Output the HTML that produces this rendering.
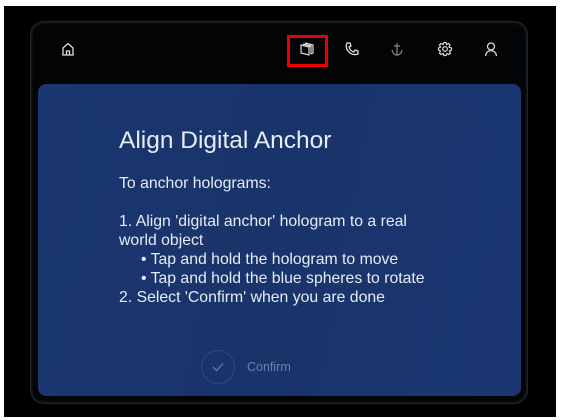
<!DOCTYPE html>
<html><head><meta charset="utf-8"><style>
*{margin:0;padding:0;box-sizing:border-box}
body{width:561px;height:420px;background:#fff;position:relative;overflow:hidden;font-family:"Liberation Sans",sans-serif}
.bk{position:absolute;left:4px;top:6px;width:552px;height:411px;background:#000}
.frame{position:absolute;left:30px;top:21px;width:498px;height:383px;border-radius:14px;background:#030405;border:1px solid #1c2530;box-shadow:0 0 3px #2a3440 inset}
.card{position:absolute;left:38px;top:84px;width:483px;height:312px;border-radius:8px;background:linear-gradient(100deg,#1b3670,#19346a 50%,#1b3672)}
.t{position:absolute;color:#e6ecf5;white-space:nowrap}
.ic{position:absolute;top:41px}
.sel{position:absolute;left:287px;top:35px;width:41px;height:32px;border:3px solid #e00}
</style></head><body>
<div class="bk"></div>
<div class="frame"></div>
<div class="card"></div>
<svg class="ic" style="left:61px" width="14" height="16" viewBox="0 0 14 16" fill="none" stroke="#ddd" stroke-width="1.3"><path d="M2 7L7 2.5L12 7V14H2Z M5.5 14V10H8.5V14"/></svg>
<svg class="ic" style="left:299px" width="16" height="16" viewBox="0 0 16 16" fill="none" stroke="#ddd" stroke-width="1.2"><path d="M2 4L10 6V14L2 12Z M4 3L12 5V13 M10 6L12 5 M6 2L14 4V12L12 13"/></svg>
<svg class="ic" style="left:344px" width="16" height="16" viewBox="0 0 16 16" fill="none" stroke="#ddd" stroke-width="1.3"><path d="M3 2L6 2L7 5L5 6Q6 10 10 11L11 9L14 10L14 13Q8 15 4 10Q1 6 3 2Z"/></svg>
<svg class="ic" style="left:390px" width="14" height="16" viewBox="0 0 14 16" fill="none" stroke="#888" stroke-width="1.2"><path d="M7 2V14 M4 5H10 M2 9Q3 14 7 14Q11 14 12 9"/></svg>
<svg class="ic" style="left:437px" width="16" height="16" viewBox="0 0 16 16" fill="none" stroke="#ddd" stroke-width="1.2"><circle cx="8" cy="8" r="2.3"/><path d="M7 1.5H9L9.5 3.5L11.5 2.5L13 4L12 6L14.5 7V9L12.5 9.8L13.5 12L12 13.5L10 12.5L9 14.5H7L6.3 12.5L4 13.5L2.5 12L3.5 10L1.5 9V7L3.5 6.2L2.5 4L4 2.5L6 3.5Z"/></svg>
<svg class="ic" style="left:484px" width="14" height="16" viewBox="0 0 14 16" fill="none" stroke="#ddd" stroke-width="1.3"><circle cx="7" cy="5.5" r="3.5"/><path d="M1.5 15Q2 10 7 9.5Q12 10 12.5 15"/></svg>
<div class="sel"></div>
<div class="t" style="left:119px;top:127px;font-size:24.5px">Align Digital Anchor</div>
<div class="t" style="left:119px;top:174px;font-size:15.8px;line-height:19px">To anchor holograms:<br><br>1. Align 'digital anchor' hologram to a real<br>world object<br>&nbsp;&nbsp;&nbsp;&nbsp;&nbsp;• Tap and hold the hologram to move<br>&nbsp;&nbsp;&nbsp;&nbsp;&nbsp;• Tap and hold the blue spheres to rotate<br>2. Select 'Confirm' when you are done</div>
<div style="position:absolute;left:201px;top:350px;width:34px;height:34px;border-radius:50%;border:1px solid #2f4a80"></div>
<svg style="position:absolute;left:211px;top:362px" width="14" height="10" viewBox="0 0 14 10" fill="none" stroke="#6a80aa" stroke-width="1.2"><path d="M2 5L5.5 8.5L12 1.5"/></svg>
<div class="t" style="left:247px;top:360px;font-size:12.5px;color:#6a80aa">Confirm</div>
</body></html>
